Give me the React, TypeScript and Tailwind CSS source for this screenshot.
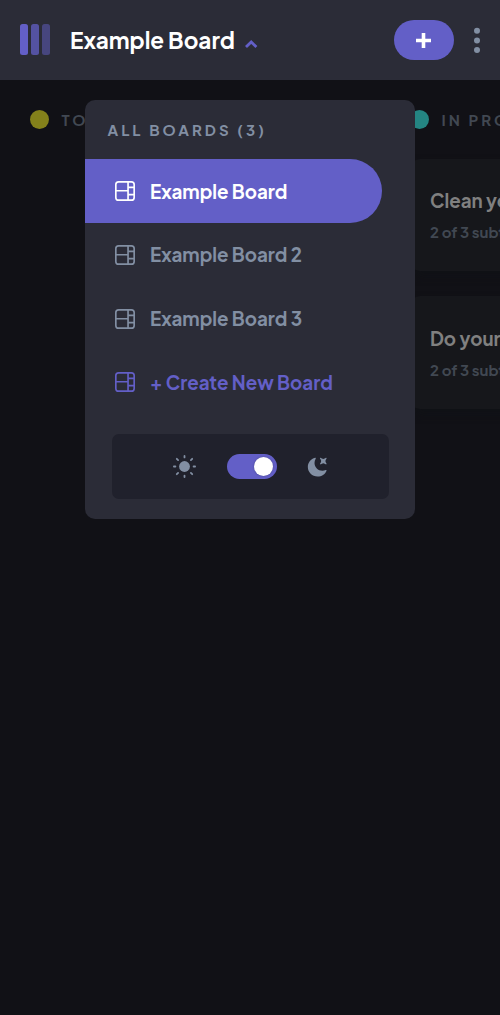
import { clsx } from "clsx";

function BoardIcon() {
  return (
    <svg width="20" height="20" viewBox="0 0 16 16" className="shrink-0 fill-current">
      <path d="M0 2.889A2.889 2.889 0 0 1 2.889 0H13.11A2.889 2.889 0 0 1 16 2.889V13.11A2.888 2.888 0 0 1 13.111 16H2.89A2.889 2.889 0 0 1 0 13.111V2.89Zm1.333 5.555v4.667c0 .859.697 1.556 1.556 1.556h6.889V8.444H1.333Zm8.445-1.333V1.333h-6.89A1.556 1.556 0 0 0 1.334 2.89V7.11h8.445Zm4.889-1.333H11.11v4.444h3.556V5.778Zm0 5.778H11.11v3.11h2a1.556 1.556 0 0 0 1.556-1.555v-1.555Zm0-7.112V2.89a1.555 1.555 0 0 0-1.556-1.556h-2v3.111h3.556Z" />
    </svg>
  );
}

function SunIcon() {
  return (
    <svg width="24" height="24" viewBox="0 0 24 24" className="text-[#828fa3]">
      <circle cx="11.5" cy="11.5" r="5.4" fill="currentColor" />
      <path
        d="M11.5 .9v1.5M11.5 20.6v1.5M.9 11.5h1.5M20.6 11.5h1.5M3.8 3.8l1.3 1.3M17.9 17.9l1.3 1.3M3.8 19.2l1.3-1.3M17.9 5.1l1.3-1.3"
        stroke="currentColor"
        strokeWidth="1.8"
        strokeLinecap="round"
      />
    </svg>
  );
}

function MoonIcon() {
  return (
    <svg width="20" height="20" viewBox="0 0 16 16" className="fill-[#828fa3]">
      <path d="M6.474.682c.434-.11.718.406.481.78A6.067 6.067 0 0 0 6.01 4.72c0 3.418 2.827 6.187 6.314 6.187.89.002 1.77-.182 2.584-.54.408-.18.894.165.724.57-1.16 2.775-3.944 4.73-7.194 4.73-4.292 0-7.771-3.41-7.771-7.615 0-3.541 2.466-6.518 5.807-7.37Zm8.433.07c.442-.294.969.232.674.674l-.525.787a1.943 1.943 0 0 0 0 2.157l.525.788c.295.441-.232.968-.674.673l-.787-.525a1.943 1.943 0 0 0-2.157 0l-.786.525c-.442.295-.97-.232-.675-.673l.525-.788a1.943 1.943 0 0 0 0-2.157l-.525-.787c-.295-.442.232-.968.674-.673l.787.525a1.943 1.943 0 0 0 2.157 0Z" />
    </svg>
  );
}

function Header() {
  return (
    <header className="flex h-20 items-center bg-[#2b2c37] px-5">
      <div className="mb-px flex h-[31px] gap-[3px]">
        <span className="w-2 rounded-[2.5px] bg-[#635fc7]" />
        <span className="w-2 rounded-[2.5px] bg-[#635fc7]/75" />
        <span className="w-2 rounded-[2.5px] bg-[#635fc7]/50" />
      </div>
      <h1 className="mb-px ml-5 w-[165px] text-[22.5px] leading-[30px] font-bold whitespace-nowrap text-white">
        Example Board
      </h1>
      <svg width="14" height="10" viewBox="0 0 14 10" className="mt-2 ml-[9px]">
        <path d="M2 8 7.2 3 12.4 8" fill="none" stroke="#635fc7" strokeWidth="2.8" />
      </svg>
      <button className="ml-auto flex h-10 w-[60px] items-center justify-center rounded-full bg-[#635fc7] pr-px">
        <svg width="15" height="15" viewBox="0 0 15 15">
          <path d="M5.7 0h3.6v5.8H15v3.5H9.3V15H5.7V9.3H0V5.8h5.7Z" fill="#fff" />
        </svg>
      </button>
      <svg width="6" height="26" viewBox="0 0 6 26" className="ml-5 fill-[#828fa3]">
        <circle cx="3" cy="3.8" r="3" />
        <circle cx="3" cy="13.4" r="3" />
        <circle cx="3" cy="23" r="3" />
      </svg>
    </header>
  );
}

function ColumnTitle({ dot, label }: { dot: string; label: string }) {
  return (
    <div className="flex h-[19px] items-center gap-[12.5px]">
      <span className={clsx("size-[19px] shrink-0 rounded-full", dot)} />
      <h2 className="text-[15px] leading-5 font-bold tracking-[3px] whitespace-nowrap text-[#414852]">{label}</h2>
    </div>
  );
}

function Card({ title }: { title: string }) {
  return (
    <article className="flex h-[112.4px] flex-col rounded-[10px] bg-[#16171b] px-5 pt-[27.3px] shadow-[0_5px_8px_#101216]">
      <h3 className="text-[18.75px] leading-[30px] font-bold whitespace-nowrap text-[#808080]">{title}</h3>
      <p className="mt-0.5 text-[15px] leading-7 font-bold whitespace-nowrap text-[#414852]">2 of 3 subtasks</p>
    </article>
  );
}

const boards = ["Example Board", "Example Board 2", "Example Board 3", "+ Create New Board"];
const tones = ["bg-[#635fc7] text-white", "text-[#828fa3]", "text-[#828fa3]", "text-[#635fc7]"];

function BoardMenu() {
  return (
    <div className="absolute top-5 left-[85px] flex h-[419px] w-[330px] flex-col rounded-[10px] bg-[#2b2c37]">
      <h2 className="mt-5 mb-[19.2px] ml-[22.5px] text-[15px] leading-5 font-bold tracking-[3px] text-[#828fa3]">
        ALL BOARDS (3)
      </h2>
      <nav className="flex flex-col">
        {boards.map((name, i) => (
          <button
            key={name}
            className={clsx(
              "flex h-[63.75px] w-[297px] items-center gap-[15px] rounded-r-full pl-[30px] text-left text-[18.75px] leading-6 font-bold whitespace-nowrap",
              tones[i],
            )}
          >
            <BoardIcon />
            <span className="mt-px">{name}</span>
          </button>
        ))}
      </nav>
      <div className="mx-auto mt-5 flex h-[65px] w-[277px] items-center justify-center gap-[30px] rounded-[7px] bg-[#20212c]">
        <SunIcon />
        <button className="flex h-[25px] w-[50px] items-center justify-end rounded-full bg-[#635fc7] pr-[4px]">
          <span className="size-[19px] rounded-full bg-white shadow-[0_0_2px_#20212c66]" />
        </button>
        <MoonIcon />
      </div>
    </div>
  );
}

export default function App() {
  return (
    <div className="flex h-[1015px] w-[500px] flex-col overflow-hidden bg-[#111116] font-['Plus_Jakarta_Sans',Inter,sans-serif]">
      <Header />
      <main className="relative flex flex-1 gap-[30px] overflow-hidden pt-[30px] pl-[30px]">
        <section className="w-[350px] shrink-0">
          <ColumnTitle dot="bg-[#84811b]" label="TODO" />
        </section>
        <section className="flex w-[350px] shrink-0 flex-col">
          <ColumnTitle dot="bg-[#248582]" label="IN PROGRESS" />
          <div className="mt-[30px] flex flex-col gap-[25px]">
            <Card title="Clean your room" />
            <Card title="Do your homework" />
          </div>
        </section>
        <BoardMenu />
      </main>
    </div>
  );
}
